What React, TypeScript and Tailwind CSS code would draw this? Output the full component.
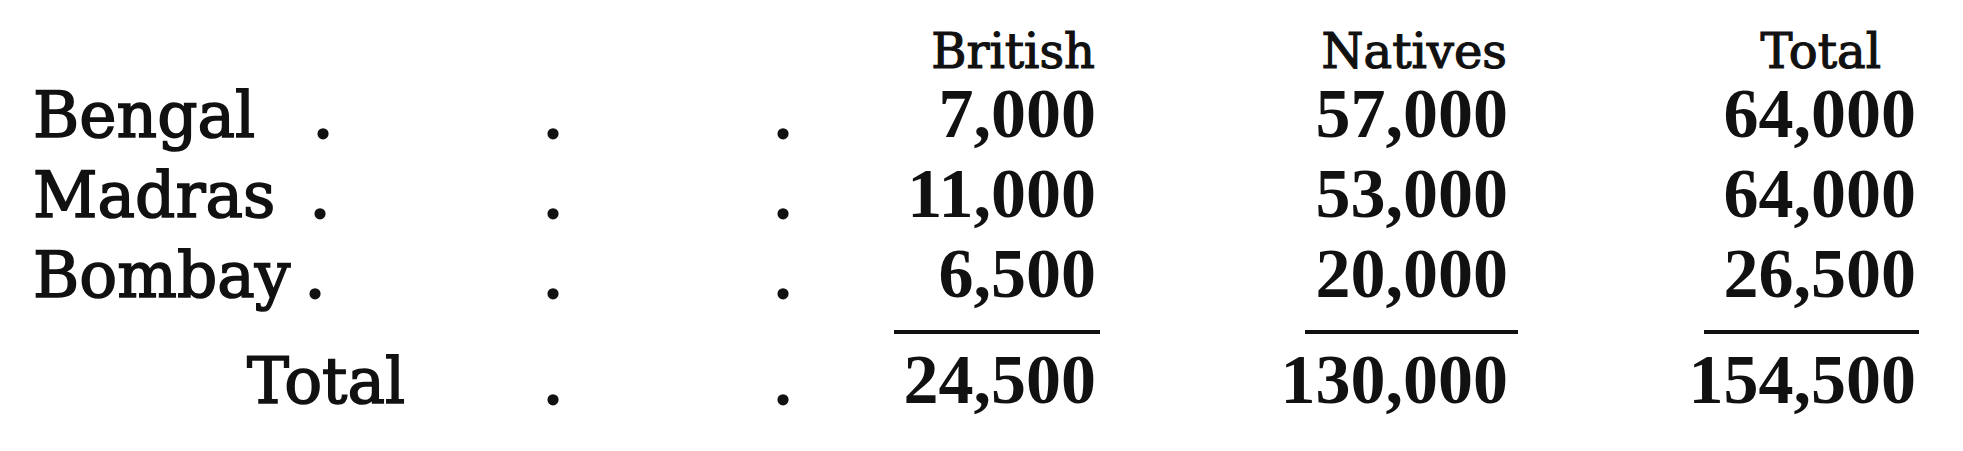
const rows = [
  { name: "Bengal", lead: "translate-x-[3px]", british: "7,000", natives: "57,000", total: "64,000" },
  { name: "Madras", lead: "", british: "11,000", natives: "53,000", total: "64,000" },
  { name: "Bombay", lead: "-translate-x-[5px]", british: "6,500", natives: "20,000", total: "26,500" },
];

const grid =
  "grid grid-cols-[290px_60px_406px_54px_290px_408px_408px] items-baseline";
const label =
  "font-['DejaVu_Serif',serif] text-[63px] [-webkit-text-stroke:1.6px_#111]";
const dot =
  "font-['DejaVu_Serif',serif] text-[63px] text-center [-webkit-text-stroke:3px_#111]";
const num = "font-['Liberation_Serif',serif] text-[70px] font-bold text-right";

export default function App() {
  return (
    <div className="w-full h-[451px] bg-white text-[#111] pt-[27px] overflow-hidden">
      {/* column heads */}
      <div
        className={`${grid} leading-[48px] font-['DejaVu_Serif',serif] text-[48px] [-webkit-text-stroke:1.2px_#111]`}
      >
        <div className="col-start-5 text-right pr-[5px]">British</div>
        <div className="text-right pr-[1px]">Natives</div>
        <div className="text-right pr-[35px]">Total</div>
      </div>

      {rows.map((r) => (
        <div key={r.name} className={`${grid} leading-[78px]`}>
          <div className={`${label} pl-[33px]`}>{r.name}</div>
          <div className={`${dot} ${r.lead}`}>.</div>
          <div className={dot}>.</div>
          <div className={dot}>.</div>
          <div className={`${num} pr-[4px]`}>{r.british}</div>
          <div className={num}>{r.natives}</div>
          <div className={num}>{r.total}</div>
        </div>
      ))}

      {/* sum rules */}
      <div className={`${grid} h-[26px] pt-[15px]`}>
        <div className="col-start-5 flex justify-end">
          <div className="h-[4px] w-[206px] bg-[#111]" />
        </div>
        <div className="flex justify-end -mr-[10px]">
          <div className="h-[4px] w-[213px] bg-[#111]" />
        </div>
        <div className="flex justify-end -mr-[3px]">
          <div className="h-[4px] w-[215px] bg-[#111]" />
        </div>
      </div>

      <div className={`${grid} leading-[78px]`}>
        <div className={`${label} col-span-2 pl-[247px]`}>Total</div>
        <div className={dot}>.</div>
        <div className={dot}>.</div>
        <div className={`${num} pr-[4px]`}>24,500</div>
        <div className={num}>130,000</div>
        <div className={num}>154,500</div>
      </div>
    </div>
  );
}
